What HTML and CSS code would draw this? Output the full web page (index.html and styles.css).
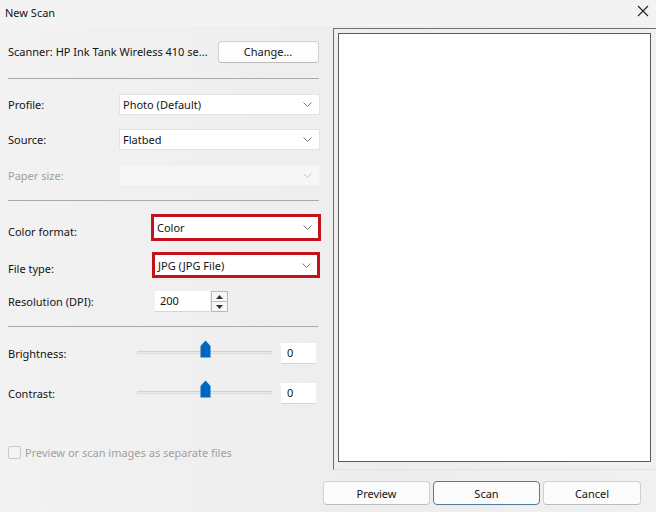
FILE: index.html
```html
<!DOCTYPE html>
<html lang="en">
<head>
    <meta charset="UTF-8">
    <title>New Scan</title>
    <link rel="stylesheet" href="styles.css">
</head>
<body>
    <div class="dialog">
        <div class="title-bar">
            <span class="title-text">New Scan</span>
            <svg class="close-icon" width="12" height="12" viewBox="0 0 12 12">
                <path d="M1 1 L11 11 M11 1 L1 11" stroke="#222" stroke-width="1.1" fill="none"/>
            </svg>
        </div>

        <div class="dialog-body">
            <div class="settings-panel">
                <!-- Scanner -->
                <div class="row scanner-row">
                    <span class="scanner-name">Scanner: HP Ink Tank Wireless 410 se...</span>
                    <button class="btn change-btn">Change...</button>
                </div>
                <div class="separator sep-1"></div>

                <!-- Profile / Source / Paper size -->
                <div class="row field-row profile-row">
                    <label class="field-label">Profile:</label>
                    <div class="dropdown"><span>Photo (Default)</span><svg class="chevron" width="9" height="5" viewBox="0 0 9 5"><path d="M0.5 0.5 L4.5 4.5 L8.5 0.5" stroke="#777" fill="none"/></svg></div>
                </div>
                <div class="row field-row source-row">
                    <label class="field-label">Source:</label>
                    <div class="dropdown"><span>Flatbed</span><svg class="chevron" width="9" height="5" viewBox="0 0 9 5"><path d="M0.5 0.5 L4.5 4.5 L8.5 0.5" stroke="#777" fill="none"/></svg></div>
                </div>
                <div class="row field-row paper-row">
                    <label class="field-label disabled">Paper size:</label>
                    <div class="dropdown dropdown-disabled"><span></span><svg class="chevron" width="9" height="5" viewBox="0 0 9 5"><path d="M0.5 0.5 L4.5 4.5 L8.5 0.5" stroke="#c4c4c4" fill="none"/></svg></div>
                </div>
                <div class="separator sep-2"></div>

                <!-- Color format / File type / Resolution -->
                <div class="row field-row color-row">
                    <label class="field-label wide">Color format:</label>
                    <div class="highlight">
                        <div class="dropdown"><span>Color</span><svg class="chevron" width="9" height="5" viewBox="0 0 9 5"><path d="M0.5 0.5 L4.5 4.5 L8.5 0.5" stroke="#777" fill="none"/></svg></div>
                    </div>
                </div>
                <div class="row field-row filetype-row">
                    <label class="field-label wide">File type:</label>
                    <div class="highlight highlight-narrow">
                        <div class="dropdown"><span>JPG (JPG File)</span><svg class="chevron" width="9" height="5" viewBox="0 0 9 5"><path d="M0.5 0.5 L4.5 4.5 L8.5 0.5" stroke="#777" fill="none"/></svg></div>
                    </div>
                </div>
                <div class="row field-row resolution-row">
                    <label class="field-label res-label">Resolution (DPI):</label>
                    <div class="number-input">200</div>
                    <div class="spinner">
                        <div class="spin-btn"><svg width="7" height="4" viewBox="0 0 7 4"><path d="M0 4 L3.5 0 L7 4 Z" fill="#333"/></svg></div>
                        <div class="spin-btn"><svg width="7" height="4" viewBox="0 0 7 4"><path d="M0 0 L3.5 4 L7 0 Z" fill="#333"/></svg></div>
                    </div>
                </div>
                <div class="separator sep-3"></div>

                <!-- Brightness / Contrast -->
                <div class="row slider-row brightness-row">
                    <label class="field-label slider-label">Brightness:</label>
                    <div class="slider">
                        <div class="track"></div>
                        <svg class="thumb" width="11" height="18" viewBox="0 0 11 18"><path d="M0.5 6 L5.5 0.5 L10.5 6 L10.5 17.5 L0.5 17.5 Z" fill="#0067c0"/></svg>
                    </div>
                    <div class="value-box">0</div>
                </div>
                <div class="row slider-row contrast-row">
                    <label class="field-label slider-label">Contrast:</label>
                    <div class="slider">
                        <div class="track"></div>
                        <svg class="thumb" width="11" height="18" viewBox="0 0 11 18"><path d="M0.5 6 L5.5 0.5 L10.5 6 L10.5 17.5 L0.5 17.5 Z" fill="#0067c0"/></svg>
                    </div>
                    <div class="value-box">0</div>
                </div>

                <!-- Separate files option -->
                <div class="row check-row">
                    <span class="checkbox"></span>
                    <span class="check-label">Preview or scan images as separate files</span>
                </div>
            </div>

            <div class="preview-frame">
                <div class="preview-page"></div>
            </div>
        </div>

        <div class="button-bar">
            <button class="btn action-btn">Preview</button>
            <button class="btn action-btn default-btn">Scan</button>
            <button class="btn action-btn cancel-btn">Cancel</button>
        </div>
    </div>
</body>
</html>
```

FILE: styles.css
```css
:root {
    --dialog-bg: #f0f0f0;
    --title-bg: #f3f3f3;
    --text: #141414;
    --text-disabled: #a0a0a0;
    --field-border: #e3e3e3;
    --line: #a9a9a9;
    --accent: #0067c0;
    --mark-red: #c4121c;
}

html, body {
    margin: 0;
    padding: 0;
    overflow: hidden;
}

body {
    font-family: "Noto Sans", "Open Sans", sans-serif;
    font-size: 11px;
    color: var(--text);
    background-color: var(--dialog-bg);
}

.dialog {
    width: 656px;
    height: 512px;
    display: flex;
    flex-direction: column;
    background: linear-gradient(to right, #f2f2f2, #ededed 60%, #f0f0f0);
}

/* Title bar */
.title-bar {
    height: 26px;
    display: flex;
    align-items: center;
    justify-content: space-between;
    padding: 0 7px 0 5px;
    background-color: var(--title-bg);
}
.title-text {
    margin-top: -2px;
}
.close-icon {
    margin-top: -4px;
}

.dialog-body {
    display: flex;
    height: 446px;
}

/* Left settings column */
.settings-panel {
    width: 312px;
    padding-left: 8px;
    margin-right: 13px;
    display: flex;
    flex-direction: column;
}

.row {
    display: flex;
    align-items: center;
}

.scanner-row {
    margin-top: 15px;
    height: 21px;
    justify-content: space-between;
}
.scanner-name {
    white-space: nowrap;
}

.btn {
    font-family: inherit;
    font-size: 11px;
    color: var(--text);
    background-color: #fdfdfd;
    border: 1px solid #d0d0d0;
    border-bottom-color: #bcbcbc;
    border-radius: 4px;
    padding: 0;
}
.change-btn {
    width: 101px;
    height: 22px;
    margin-right: 1px;
}

.separator {
    height: 0;
    border-top: 1px solid var(--line);
    margin-right: 1px;
}
.sep-1 { margin-top: 16px; }
.sep-2 { margin-top: 14px; }
.sep-3 { margin-top: 14px; margin-right: 2px; }

.field-row {
    height: 21px;
}
.profile-row { margin-top: 15px; }
.source-row { margin-top: 14px; }
.paper-row { margin-top: 15px; }
.color-row { margin-top: 13px; height: 27px; }
.filetype-row { margin-top: 11px; height: 26px; }
.resolution-row { margin-top: 13px; }

.field-label {
    width: 111px;
    flex-shrink: 0;
}
.field-label.disabled {
    color: var(--text-disabled);
}
.field-label.wide {
    width: 143px;
    padding-top: 7px;
}
.res-label {
    width: 147px;
}

.dropdown {
    flex: 1;
    height: 21px;
    display: flex;
    align-items: center;
    justify-content: space-between;
    padding: 0 7px 0 3px;
    background-color: #fff;
    border: 1px solid var(--field-border);
    box-sizing: border-box;
}
.dropdown-disabled {
    background-color: #f6f6f6;
    border-color: #f0f0f0;
}
.chevron {
    flex-shrink: 0;
}

/* Red marker boxes */
.highlight {
    flex: 1;
    height: 27px;
    border: 3px solid var(--mark-red);
    box-sizing: border-box;
    margin-right: -1px;
}
.highlight .dropdown {
    height: 100%;
    border: none;
    padding-left: 3px;
    padding-right: 6px;
}
.highlight-narrow {
    height: 26px;
    margin-left: 1px;
    margin-right: 0;
}

.number-input {
    width: 55px;
    height: 21px;
    box-sizing: border-box;
    padding-left: 5px;
    line-height: 20px;
    background-color: #fff;
    border-bottom: 1px solid #d5d5d5;
}
.spinner {
    margin-left: 1px;
    width: 17px;
    height: 21px;
    display: flex;
    flex-direction: column;
    border: 1px solid #b9b9b9;
    box-sizing: border-box;
}
.spin-btn {
    flex: 1;
    display: flex;
    align-items: center;
    justify-content: center;
    background-color: #f7f7f7;
}
.spin-btn + .spin-btn {
    border-top: 1px solid #b9b9b9;
}

/* Sliders */
.slider-row {
    height: 21px;
}
.brightness-row { margin-top: 16px; }
.contrast-row { margin-top: 19px; }
.slider-label {
    width: 129px;
}
.slider {
    position: relative;
    width: 135px;
    height: 21px;
}
.track {
    position: absolute;
    left: 0;
    right: 0;
    top: 8px;
    height: 3px;
    box-sizing: border-box;
    border: 1px solid #dedede;
    border-top-color: #d2d2d2;
    background-color: #e9e9e9;
}
.thumb {
    position: absolute;
    left: 63px;
    top: -3px;
}
.value-box {
    margin-left: 9px;
    width: 35px;
    height: 21px;
    box-sizing: border-box;
    padding-left: 6px;
    line-height: 20px;
    background-color: #fff;
    border-bottom: 1px solid #d5d5d5;
}

.check-row {
    margin-top: 42px;
    height: 13px;
}
.checkbox {
    width: 11px;
    height: 11px;
    border: 1px solid #c8c8c8;
    border-radius: 2px;
    background-color: #f4f4f4;
}
.check-label {
    margin-left: 4px;
    color: var(--text-disabled);
}

/* Preview pane */
.preview-frame {
    width: 324px;
    height: 442px;
    margin-top: 2px;
    box-sizing: border-box;
    padding: 4px;
    border-top: 1px solid #6f6f6f;
    border-left: 1px solid #6f6f6f;
    border-bottom: 1px solid #e2e2e2;
}
.preview-page {
    width: 313px;
    height: 429px;
    box-sizing: border-box;
    background-color: #fff;
    border: 1px solid #5a5a5a;
}

/* Bottom buttons */
.button-bar {
    display: flex;
    justify-content: flex-end;
    gap: 3px;
    padding: 9px 15px 0 0;
}
.action-btn {
    width: 107px;
    height: 24px;
    background-color: #fbfbfb;
}
.cancel-btn {
    width: 98px;
}
.default-btn {
    border: 1px solid #4e7c9f;
    border-radius: 4px;
}
```
